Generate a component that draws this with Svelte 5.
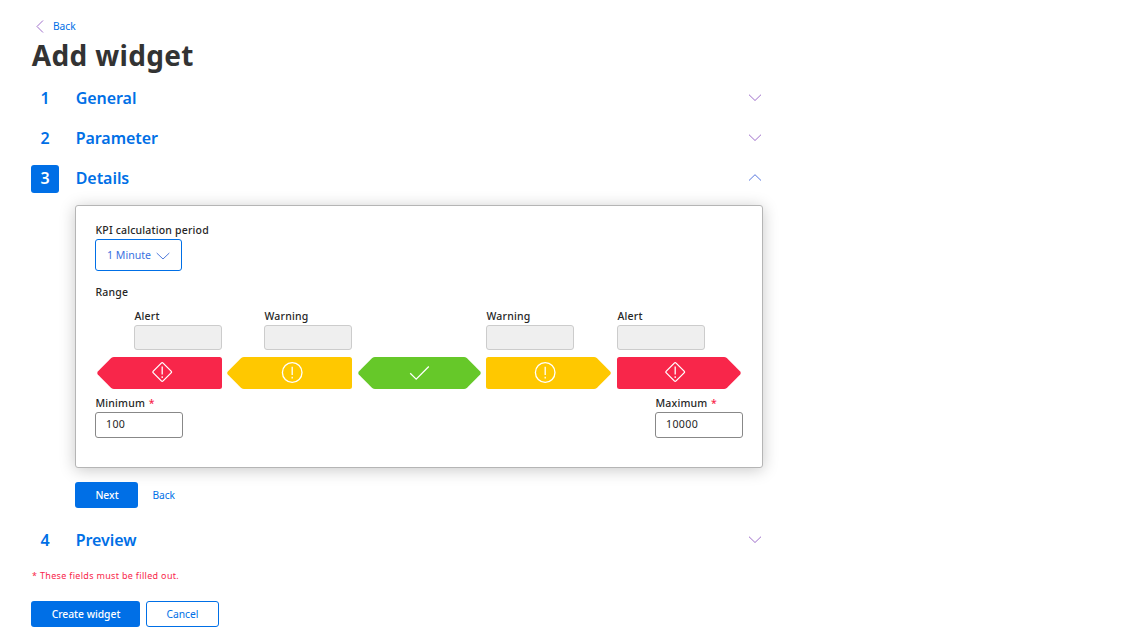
<script>
  const before = [{ n: 1, title: 'General' }, { n: 2, title: 'Parameter' }, { n: 3, title: 'Details', open: true }];
  const after = [{ n: 4, title: 'Preview' }];
  const ranges = [
    { kind: 'alert', side: 'left', label: 'Alert', width: 125 },
    { kind: 'warning', side: 'left', label: 'Warning', width: 125 },
    { kind: 'ok', side: 'both', label: '', width: 123 },
    { kind: 'warning', side: 'right', label: 'Warning', width: 125 },
    { kind: 'alert', side: 'right', label: 'Alert', width: 124 }
  ];
  function shape(side, w) {
    const l = side === 'right' ? 'M2.5 0' : 'M17 0';
    const r = side === 'left'
      ? `H${w - 2.5}Q${w} 0 ${w} 2.5V29.5Q${w} 32 ${w - 2.5} 32`
      : `H${w - 17}Q${w - 15.5} 0 ${w - 14.2} 1L${w - 0.8} 14.6Q${w + 0.4} 16 ${w - 0.8} 17.4L${w - 14.2} 31Q${w - 15.5} 32 ${w - 17} 32`;
    const end = side === 'right'
      ? 'H2.5Q0 32 0 29.5V2.5Q0 0 2.5 0Z'
      : 'H17Q15.5 32 14.2 31L.8 17.4Q-.4 16 .8 14.6L14.2 1Q15.5 0 17 0Z';
    return l + r + end;
  }
</script>

{#snippet step(s)}
  <div class="step">
    <span class="num" class:active={s.open}>{s.n}</span>
    <h2>{s.title}</h2>
    <svg class="chev" width="14" height="8" viewBox="0 0 14 8"><path d={s.open ? 'M1 6.5L7 .7l6 5.8' : 'M1 .7l6 5.8L13 .7'} /></svg>
  </div>
{/snippet}

<main>
  <a class="top-back" href="#back"><svg width="8" height="14" viewBox="0 0 8 14"><path d="M7 1.5L1 7.5l6 6" /></svg><span>Back</span></a>
  <h1>Add widget</h1>
  {#each before as s}{@render step(s)}{/each}

  <section class="card">
    <div class="label">KPI calculation period</div>
    <button class="select"><span>1 Minute</span><svg width="14" height="8" viewBox="0 0 14 8"><path d="M.7 1L7 7l6.3-6" /></svg></button>
    <div class="label range-title">Range</div>
    <div class="ranges">
      {#each ranges as r}
        <div class="range {r.side}" style="width:{r.width}px">
          <div class="field">
            {#if r.label}<div class="label">{r.label}</div><input disabled aria-label={r.label} />{/if}
          </div>
          <svg class="arrow {r.kind}" width={r.width} height="32" viewBox="0 0 {r.width} 32">
            <path class="shape" d={shape(r.side, r.width)} />
            <g transform="translate({r.side === 'left' ? 65.2 : r.side === 'both' ? 61.5 : r.kind === 'alert' ? 58.2 : 59.2} {r.kind === 'alert' ? 15 : 15.5})">
              {#if r.kind === 'alert'}
                <path class="line" d="M-.9-8.9Q0-9.8.9-8.9L8.9-.9Q9.8 0 8.9.9L.9 8.9Q0 9.8-.9 8.9L-8.9.9Q-9.8 0-8.9-.9ZM0-5.5V2.5M0 4.3V6" />
              {:else if r.kind === 'warning'}
                <circle class="line" r="9.8" /><path class="line" d="M0-5.8V2.5M0 4.2V6" />
              {:else}
                <path class="line" d="M-9.3.8L-3.3 6.6 9.3-6" />
              {/if}
            </g>
          </svg>
        </div>
      {/each}
    </div>
    <div class="limits">
      <div><div class="label">Minimum <b>*</b></div><input value="100" aria-label="Minimum" /></div>
      <div><div class="label">Maximum <b>*</b></div><input value="10000" aria-label="Maximum" /></div>
    </div>
  </section>

  <div class="nav"><button class="primary next">Next</button><a href="#back">Back</a></div>
  {#each after as s}{@render step(s)}{/each}
  <p class="note">* These fields must be filled out.</p>
  <div class="actions"><button class="primary create">Create widget</button><button class="outline">Cancel</button></div>
</main>

<style>
  :global(body) { background: #fff; overflow: hidden; }
  main { box-sizing: border-box; width: 763px; height: 638px; padding: 18px 0 0 31px; font-family: "Noto Sans", sans-serif; font-size: 11px; color: #262626; }
  main * { box-sizing: border-box; }
  a { color: #006fe6; text-decoration: none; }
  svg { display: block; fill: none; overflow: visible; flex: none; }
  .top-back { display: flex; align-items: center; height: 16px; padding-left: 5px; gap: 9px; font-size: 10.2px; }
  .top-back svg, .chev { stroke: #a070cc; stroke-width: 1; }
  h1 { margin: 0 0 0 .8px; height: 44px; line-height: 42px; font-size: 28px; font-weight: 700; color: #333; letter-spacing: .34px; }
  .step { display: flex; align-items: center; height: 40px; color: #006fe6; }
  .num { width: 28px; height: 28px; line-height: 26px; margin-top: 2px; border-radius: 3px; text-align: center; font-size: 16px; font-weight: 600; }
  .active { background: #006fe6; color: #fff; }
  h2 { flex: 1; margin: 0 0 0 16.7px; line-height: 24px; font-size: 16px; font-weight: 600; letter-spacing: -.05px; }
  .chev { margin-right: 1px; }
  .active ~ .chev { stroke: #5878df; }
  .card { margin: 7px 0 0 44px; width: 688px; height: 263px; padding: 17px 19px 0; border: 1px solid #b5b5b5; border-radius: 3px; background: #fff; box-shadow: 0 2px 16px rgba(0,0,0,.22); }
  .label { height: 16px; line-height: 15px; padding-left: .5px; font-size: 10.5px; font-weight: 500; letter-spacing: .18px; white-space: nowrap; }
  button { font: 500 10.3px "Noto Sans", sans-serif; border-radius: 3px; padding: 0 0 1px; }
  .select { display: flex; align-items: center; width: 87px; height: 32px; padding: 0 0 1px 11px; gap: 5px; border: 1px solid #006fe6; background: #fff; color: #3b72df; font-weight: 400; font-size: 10.6px; }
  .select svg { stroke: #507bdb; margin-top: 2px; }
  .range-title { margin-top: 14px; }
  .ranges { display: flex; padding: 8px 0 0 2px; }
  .range { margin-right: 5px; }
  .range:nth-child(even) { margin-right: 6px; }
  .field { width: 88px; height: 41px; }
  .left .field { margin-left: auto; }
  .arrow { margin-top: 7px; }
  .alert .shape { fill: #f8264a; }
  .warning .shape { fill: #ffc800; }
  .ok .shape { fill: #66c829; }
  .line { stroke: #fff; stroke-width: 1.3; }
  input { display: block; width: 88px; height: 26px; padding: 0 10px 3px; border: 1px solid #888; border-radius: 3px; background: #fff; font: 10.6px "Noto Sans", sans-serif; color: #262626; letter-spacing: .35px; }
  input:disabled { height: 25px; border-color: #ccc; background: #efefef; }
  .limits { display: flex; justify-content: space-between; margin-top: 7px; }
  b { margin-left: .7px; color: #f8264a; font-weight: 500; }
  .nav { display: flex; align-items: center; height: 52px; padding: 14px 0 12px 44px; gap: 14.4px; font-size: 10.2px; }
  .primary { border: 0; height: 26px; background: #006fe6; color: #fff; }
  .next { width: 63px; padding-left: 1px; }
  .note { margin: 7px 0 0 1px; height: 34px; line-height: 18px; font-size: 9px; color: #f8264a; letter-spacing: .32px; }
  .actions { display: flex; gap: 6px; }
  .create { width: 109px; padding-left: 1px; }
  .outline { width: 73px; height: 26px; border: 1px solid #006fe6; background: #fff; color: #006fe6; font-weight: 400; }
</style>
